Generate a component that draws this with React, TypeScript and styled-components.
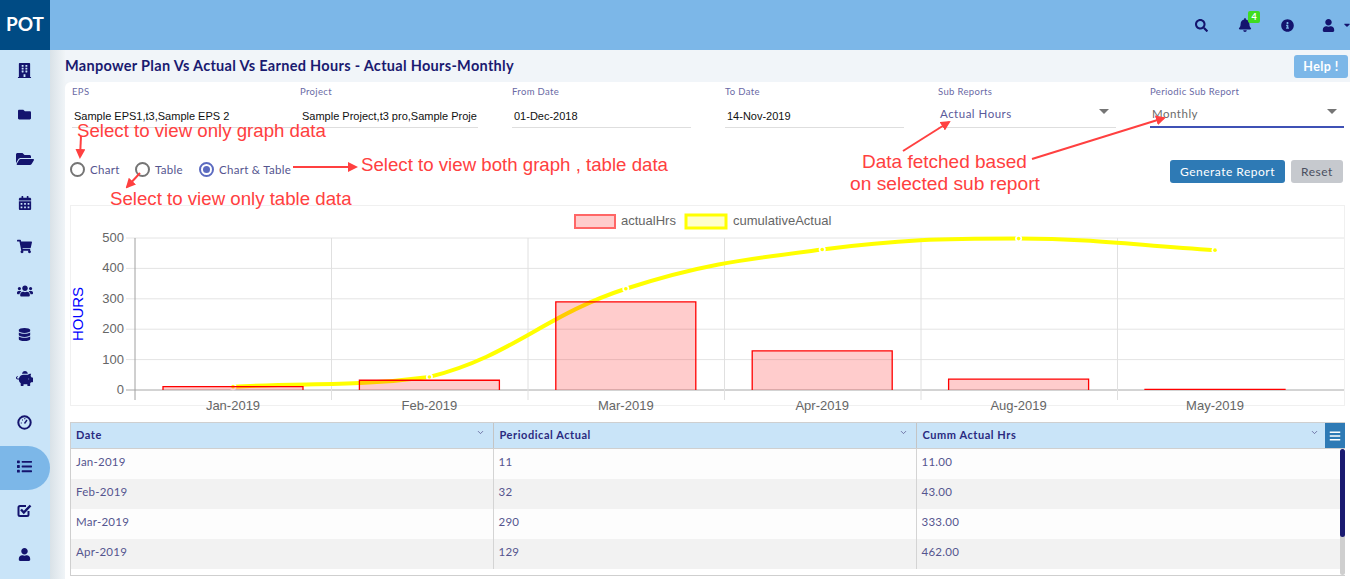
import styled, { createGlobalStyle } from 'styled-components';
import {
    FaBars, FaBell, FaBuilding, FaCalendarAlt, FaCaretDown, FaDatabase, FaFolder, FaFolderOpen,
    FaInfoCircle, FaList, FaPiggyBank, FaSearch, FaShoppingCart, FaUser, FaUsers,
} from 'react-icons/fa';
import { ChevronDown } from 'lucide-react';

const GlobalStyle = createGlobalStyle`
    html, body {
        margin: 0;
        height: 100%;
        overflow: hidden;
        background: #fff;
    }
    * {
        box-sizing: border-box;
    }
`;

const Page = styled.div`
    position: relative;
    width: 1350px;
    height: 579px;
    overflow: hidden;
    display: flex;
    flex-direction: column;
    font-family: Lato, "Liberation Sans", sans-serif;
`;

const Header = styled.header`
    height: 50px;
    flex: none;
    display: flex;
    align-items: center;
    background: #7cb7e8;
`;

const Logo = styled.div`
    width: 50px;
    height: 50px;
    display: flex;
    align-items: center;
    justify-content: center;
    padding-bottom: 3px;
    background: #004b84;
    color: #fff;
    font-size: 19px;
    font-weight: 700;
`;

const HeaderIcons = styled.div`
    margin-left: auto;
    display: flex;
    align-items: center;
    color: #14146e;
`;

const HeaderIcon = styled.div<{ $width: number }>`
    position: relative;
    width: ${props => props.$width}px;
    display: flex;
    align-items: center;
    justify-content: center;
    font-size: 13px;
`;

const Badge = styled.span`
    position: absolute;
    left: 20px;
    top: -7px;
    width: 12px;
    height: 12px;
    border-radius: 2px;
    background: #3fdc1f;
    color: #fff;
    font-size: 9px;
    font-weight: 700;
    line-height: 12px;
    text-align: center;
`;

const Body = styled.div`
    flex: 1;
    min-height: 0;
    display: flex;
`;

const Sidebar = styled.nav`
    width: 50px;
    flex: none;
    background: #c9e4f8;
`;

const SideItem = styled.div<{ $active?: boolean }>`
    height: 44px;
    padding: 0 1px 3px 0;
    display: flex;
    align-items: center;
    justify-content: center;
    color: #14146e;
    border-radius: 0 22px 22px 0;
    background: ${props => props.$active ? '#7cb7e8' : 'transparent'};
`;

const Main = styled.main`
    flex: 1;
    min-width: 0;
    display: flex;
    flex-direction: column;
    padding-left: 15px;
    background: linear-gradient(90deg, #d9e2e8, #f0f4f7 15px);
`;

const TitleBar = styled.div`
    height: 32px;
    flex: none;
    display: flex;
    align-items: center;
    justify-content: space-between;
    padding-right: 2px;
    background: #f1f5f9;
`;

const Title = styled.h1`
    margin: 0 0 2px 0;
    color: #1a1a70;
    font-size: 14.5px;
    font-weight: 700;
    letter-spacing: 0.3px;
`;

const HelpButton = styled.button`
    width: 54px;
    height: 23px;
    padding: 0;
    border: 0;
    border-radius: 3px;
    background: #7cb7e8;
    color: #fff;
    font-family: inherit;
    font-size: 12.5px;
    font-weight: 700;
    letter-spacing: 0.4px;
`;

const Card = styled.section`
    flex: 1;
    min-height: 0;
    padding: 0 5px;
    border-radius: 6px 0 0 0;
    background: #fff;
`;

const FilterRow = styled.div`
    height: 48px;
    padding-left: 2px;
    display: grid;
    grid-template-columns: 228px 212px 213px 213px 212px 194px;
`;

const Field = styled.div<{ $flush?: boolean }>`
    padding: 3px ${props => props.$flush ? 0 : 34}px 0 0;
`;

const FieldLabel = styled.label`
    display: block;
    height: 14px;
    color: #6a6aa5;
    font-size: 9.5px;
    line-height: 14px;
    letter-spacing: 0.35px;
`;

const TextValue = styled.div`
    height: 29px;
    padding: 9px 0 0 2px;
    border-bottom: 1px solid #dedede;
    overflow: hidden;
    color: #111;
    font-family: "Liberation Sans", sans-serif;
    font-size: 11px;
    line-height: 16px;
    white-space: nowrap;
`;

const SelectValue = styled.div<{ $focused?: boolean }>`
    position: relative;
    height: 29px;
    padding: 8px 0 0 2px;
    border-bottom: ${props => props.$focused ? '2px solid #3f51b5' : '1px solid #dedede'};
    color: ${props => props.$focused ? '#6a6a6a' : '#5a5a9a'};
    font-size: 11.5px;
    line-height: 14px;
    letter-spacing: 0.5px;
`;

const SelectCaret = styled.span`
    position: absolute;
    right: 7px;
    top: 10px;
    width: 0;
    height: 0;
    border-left: 5px solid transparent;
    border-right: 5px solid transparent;
    border-top: 5px solid #757575;
`;

const ControlRow = styled.div`
    height: 23px;
    margin-top: 30px;
    display: flex;
    align-items: center;
    justify-content: space-between;
    padding-right: 2px;
`;

const RadioGroup = styled.div`
    display: flex;
    margin: -5px 0 0 0;
`;

const RadioOption = styled.div<{ $width: number }>`
    width: ${props => props.$width}px;
    display: flex;
    align-items: center;
    gap: 5px;
    color: #55558f;
    font-size: 11.5px;
    letter-spacing: 0.3px;
`;

const RadioMark = styled.span<{ $checked?: boolean }>`
    width: 15px;
    height: 15px;
    flex: none;
    display: flex;
    align-items: center;
    justify-content: center;
    border: 2px solid ${props => props.$checked ? '#5c6bc0' : '#757575'};
    border-radius: 50%;

    &::after {
        content: "";
        width: 7px;
        height: 7px;
        border-radius: 50%;
        background: ${props => props.$checked ? '#5c6bc0' : 'transparent'};
    }
`;

const ButtonGroup = styled.div`
    display: flex;
    gap: 6px;
`;

const ActionButton = styled.button<{ $primary?: boolean }>`
    width: ${props => props.$primary ? 115 : 52}px;
    height: 23px;
    padding: 0;
    border: 0;
    border-radius: 3px;
    background: ${props => props.$primary ? '#2e7ab5' : '#c6c9ce'};
    color: ${props => props.$primary ? '#fff' : '#4a4f60'};
    font-family: inherit;
    font-size: 12px;
    font-weight: 400;
    letter-spacing: 0.5px;
`;

const ChartPanel = styled.div`
    height: 201px;
    margin-top: 22px;
    border: 1px solid #f0f0f0;
`;

const ChartSvg = styled.svg`
    display: block;
    width: 100%;
    height: 100%;
    overflow: visible;
    font-family: "Liberation Sans", sans-serif;
    font-size: 13px;
`;

const TableWrap = styled.div`
    position: relative;
    height: 154px;
    margin-top: 16px;
    border: 1px solid #cfcfcf;
    border-right: 0;
    overflow: hidden;
`;

const DataTable = styled.table`
    width: 100%;
    table-layout: fixed;
    border-collapse: collapse;
`;

const HeadCell = styled.th<{ $width?: number; $arrowRight: number }>`
    position: relative;
    width: ${props => props.$width ? `${props.$width}px` : 'auto'};
    height: 25px;
    padding: 0 0 1px 6px;
    border-right: 1px solid #c4c4c4;
    border-bottom: 1px solid #cfcfcf;
    background: #c9e4f8;
    color: #2a2a80;
    font-size: 11px;
    font-weight: 700;
    letter-spacing: 0.55px;
    text-align: left;

    &:first-child {
        padding-left: 5px;
    }

    &:last-child {
        border-right: 0;
    }

    svg {
        position: absolute;
        top: 5px;
        right: ${props => props.$arrowRight}px;
        color: #55558f;
    }
`;

const Row = styled.tr`
    &:nth-child(odd) {
        background: #fdfdfd;
    }
    &:nth-child(even) {
        background: #f2f2f2;
    }
    &:first-child td {
        height: 31px;
    }
`;

const Cell = styled.td`
    height: 30px;
    padding: 6px 0 0 5px;
    border-right: 1px solid #d4d4d4;
    color: #55558f;
    font-size: 11.5px;
    line-height: 14px;
    letter-spacing: 0.25px;
    vertical-align: top;

    &:last-child {
        border-right: 0;
    }
`;

const MenuButton = styled.div`
    position: absolute;
    top: 0;
    right: 0;
    width: 20px;
    height: 25px;
    display: flex;
    align-items: center;
    justify-content: center;
    background: #2e7ab5;
    color: #fff;
    font-size: 12px;
`;

const ScrollTrack = styled.div`
    position: absolute;
    top: 26px;
    right: 0;
    bottom: 0;
    width: 5px;
    background: #cfcfcf;
    border-radius: 3px;
`;

const ScrollThumb = styled.div`
    height: 88px;
    background: #1a1a70;
    border-radius: 3px;
`;

const Annotation = styled.div<{ $x: number; $y: number; $size?: number }>`
    position: absolute;
    left: ${props => props.$x}px;
    top: ${props => props.$y}px;
    color: #ff4040;
    font-family: "Liberation Sans", sans-serif;
    font-size: ${props => props.$size || 18.67}px;
    line-height: 22px;
    white-space: nowrap;
`;

const ArrowLayer = styled.svg`
    position: absolute;
    left: 0;
    top: 0;
    width: 1350px;
    height: 579px;
    pointer-events: none;
`;

// these two have no close match in the icon packs
function GaugeIcon({ size }: { size: number }) {
    return (
        <svg width={size} height={size} viewBox="0 0 15 15" fill="none" stroke="currentColor">
            <circle cx="7.5" cy="7.5" r="6.2" strokeWidth="2" />
            <path d="M7.5 8.5 L10 5" strokeWidth="1.4" />
            <path d="M3.8 8 h1 M5 5 h1 M7.3 3.6 h1" strokeWidth="1.2" />
        </svg>
    );
}

function CheckBoxIcon({ size }: { size: number }) {
    return (
        <svg width={size} height={size} viewBox="0 0 15 15" fill="none" stroke="currentColor">
            <path d="M11.5 8 V11.5 Q11.5 13 10 13 H3 Q1.5 13 1.5 11.5 V4.5 Q1.5 3 3 3 H9" strokeWidth="2" />
            <path d="M4 6.5 L6.8 9.5 L13.5 2.5" strokeWidth="2.4" />
        </svg>
    );
}

const sideIcons = [
    { Icon: FaBuilding, size: 15 },
    { Icon: FaFolder, size: 13 },
    { Icon: FaFolderOpen, size: 18 },
    { Icon: FaCalendarAlt, size: 14 },
    { Icon: FaShoppingCart, size: 15 },
    { Icon: FaUsers, size: 16 },
    { Icon: FaDatabase, size: 13 },
    { Icon: FaPiggyBank, size: 17 },
    { Icon: GaugeIcon, size: 15 },
    { Icon: FaList, size: 15 },
    { Icon: CheckBoxIcon, size: 15 },
    { Icon: FaUser, size: 13 },
];

const filters = [
    { label: 'EPS', value: 'Sample EPS1,t3,Sample EPS 2', flush: true },
    { label: 'Project', value: 'Sample Project,t3 pro,Sample Proje' },
    { label: 'From Date', value: '01-Dec-2018' },
    { label: 'To Date', value: '14-Nov-2019' },
];

const months = [
    { name: 'Jan-2019', actual: 11, cumm: 11 },
    { name: 'Feb-2019', actual: 32, cumm: 43 },
    { name: 'Mar-2019', actual: 290, cumm: 333 },
    { name: 'Apr-2019', actual: 129, cumm: 462 },
    { name: 'Aug-2019', actual: 36, cumm: 498 },
    { name: 'May-2019', actual: 2, cumm: 460 },
];

const rows = [
    ['Jan-2019', '11', '11.00'],
    ['Feb-2019', '32', '43.00'],
    ['Mar-2019', '290', '333.00'],
    ['Apr-2019', '129', '462.00'],
];

const arrows = [
    [81, 136, 80, 157],
    [140, 173, 127, 187],
    [293, 167, 356, 167],
    [903, 151, 949, 122],
    [1032, 159, 1164, 118],
];

// chart scale, page coordinates
const yOf = (v: number) => 390 - v * 0.304;
const xOf = (i: number) => 233 + i * 196.4;
const gridX = [135, 331.5, 528, 724.5, 921, 1117.5];

const clamp = (v: number, a: number, b: number) => Math.min(Math.max(a, b), Math.max(Math.min(a, b), v));

// chart.js style curve, control points kept inside each segment so it does not dip
function linePath(points: number[][]) {
    const t = 0.4;
    const ctrl = points.map((p, i) => {
        const prev = points[i - 1] || p;
        const next = points[i + 1] || p;
        const d01 = Math.hypot(p[0] - prev[0], p[1] - prev[1]);
        const d12 = Math.hypot(next[0] - p[0], next[1] - p[1]);
        const sum = d01 + d12 || 1;
        const fa = (t * d01) / sum;
        const fb = (t * d12) / sum;
        return {
            before: [p[0] - fa * (next[0] - prev[0]), clamp(p[1] - fa * (next[1] - prev[1]), p[1], prev[1])],
            after: [p[0] + fb * (next[0] - prev[0]), clamp(p[1] + fb * (next[1] - prev[1]), p[1], next[1])],
        };
    });
    let d = `M${points[0][0]} ${points[0][1]}`;
    for (let i = 1; i < points.length; i++) {
        const a = ctrl[i - 1].after;
        const b = ctrl[i].before;
        d += ` C${a[0]} ${a[1]} ${b[0]} ${b[1]} ${points[i][0]} ${points[i][1]}`;
    }
    return d;
}

function Chart() {
    const points = months.map((m, i) => [xOf(i), yOf(m.cumm)]);

    return (
        <ChartSvg viewBox="71 206 1273 199">
            <rect x="575" y="215" width="40" height="13" fill="rgba(255,0,0,0.2)" stroke="#ff6666" strokeWidth="2" />
            <text x="621" y="225" fill="#666">actualHrs</text>
            <rect x="686" y="215" width="40" height="13" fill="rgba(255,255,0,0.2)" stroke="#ffff00" strokeWidth="3" />
            <text x="733" y="225" fill="#666">cumulativeActual</text>

            {[0, 100, 200, 300, 400, 500].map((v) => (
                <g key={v}>
                    <line x1="126" x2="1344" y1={yOf(v)} y2={yOf(v)} stroke={v === 0 ? '#a8a8a8' : '#e4e4e4'} />
                    <text x="124" y={yOf(v) + 4} textAnchor="end" fill="#666">{v}</text>
                </g>
            ))}
            {gridX.map((x, i) => (
                <line key={x} x1={x} x2={x} y1="238" y2="400" stroke={i === 0 ? '#a0a0a0' : '#e0e0e0'} />
            ))}

            <text transform="translate(83 314) rotate(-90)" textAnchor="middle" fill="#0000ff" fontSize="15">HOURS</text>

            <path d={linePath(points)} fill="none" stroke="#ffff00" strokeWidth="4" />
            {points.map((p) => (
                <g key={p[0]}>
                    <circle cx={p[0]} cy={p[1]} r="3.5" fill="#fff" />
                    <circle cx={p[0]} cy={p[1]} r="1.8" fill="#ffff00" />
                </g>
            ))}

            {months.map((m, i) => {
                const left = xOf(i) - 70;
                const right = xOf(i) + 70;
                return (
                    <g key={m.name}>
                        <rect x={left} y={yOf(m.actual)} width="140" height={390 - yOf(m.actual)} fill="rgba(255,0,0,0.2)" />
                        <path d={`M${left} 390 V${yOf(m.actual)} H${right} V390`} fill="none" stroke="#ff0000" strokeWidth="1.3" />
                        <text x={xOf(i)} y="409.5" textAnchor="middle" fill="#666">{m.name}</text>
                    </g>
                );
            })}
        </ChartSvg>
    );
}

function App() {
    return (
        <Page>
            <GlobalStyle />
            <Header>
                <Logo>POT</Logo>
                <HeaderIcons>
                    <HeaderIcon $width={54}><FaSearch /></HeaderIcon>
                    <HeaderIcon $width={34}><FaBell size={14} /><Badge>4</Badge></HeaderIcon>
                    <HeaderIcon $width={50}><FaInfoCircle /></HeaderIcon>
                    <HeaderIcon $width={32}><FaUser /></HeaderIcon>
                    <HeaderIcon $width={6}><FaCaretDown size={10} /></HeaderIcon>
                </HeaderIcons>
            </Header>
            <Body>
                <Sidebar>
                    {sideIcons.map(({ Icon, size }, i) => (
                        <SideItem key={i} $active={i === 9}><Icon size={size} /></SideItem>
                    ))}
                </Sidebar>
                <Main>
                    <TitleBar>
                        <Title>Manpower Plan Vs Actual Vs Earned Hours - Actual Hours-Monthly</Title>
                        <HelpButton>Help !</HelpButton>
                    </TitleBar>
                    <Card>
                        <FilterRow>
                            {filters.map((f) => (
                                <Field key={f.label} $flush={f.flush}>
                                    <FieldLabel>{f.label}</FieldLabel>
                                    <TextValue>{f.value}</TextValue>
                                </Field>
                            ))}
                            <Field>
                                <FieldLabel>Sub Reports</FieldLabel>
                                <SelectValue>Actual Hours<SelectCaret /></SelectValue>
                            </Field>
                            <Field $flush>
                                <FieldLabel>Periodic Sub Report</FieldLabel>
                                <SelectValue $focused>Monthly<SelectCaret /></SelectValue>
                            </Field>
                        </FilterRow>

                        <ControlRow>
                            <RadioGroup>
                                <RadioOption $width={65}><RadioMark />Chart</RadioOption>
                                <RadioOption $width={64}><RadioMark />Table</RadioOption>
                                <RadioOption $width={100}><RadioMark $checked />Chart &amp; Table</RadioOption>
                            </RadioGroup>
                            <ButtonGroup>
                                <ActionButton $primary>Generate Report</ActionButton>
                                <ActionButton>Reset</ActionButton>
                            </ButtonGroup>
                        </ControlRow>

                        <ChartPanel>
                            <Chart />
                        </ChartPanel>

                        <TableWrap>
                            <DataTable>
                                <thead>
                                    <tr>
                                        <HeadCell $width={422} $arrowRight={8}>Date<ChevronDown size={9} /></HeadCell>
                                        <HeadCell $width={423} $arrowRight={8}>Periodical Actual<ChevronDown size={9} /></HeadCell>
                                        <HeadCell $arrowRight={26}>Cumm Actual Hrs<ChevronDown size={9} /></HeadCell>
                                    </tr>
                                </thead>
                                <tbody>
                                    {rows.map((r) => (
                                        <Row key={r[0]}>
                                            {r.map((c) => <Cell key={c}>{c}</Cell>)}
                                        </Row>
                                    ))}
                                </tbody>
                            </DataTable>
                            <MenuButton><FaBars /></MenuButton>
                            <ScrollTrack><ScrollThumb /></ScrollTrack>
                        </TableWrap>
                    </Card>
                </Main>
            </Body>

            <ArrowLayer>
                <defs>
                    <marker id="head" markerWidth="5" markerHeight="5" refX="4" refY="2.5" orient="auto">
                        <path d="M0 0 L5 2.5 L0 5 Z" fill="#ff4040" />
                    </marker>
                </defs>
                {arrows.map((a) => (
                    <line key={a[0]} x1={a[0]} y1={a[1]} x2={a[2]} y2={a[3]} stroke="#ff4040" strokeWidth="2" markerEnd="url(#head)" />
                ))}
            </ArrowLayer>
            <Annotation $x={77} $y={120}>Select to view only graph data</Annotation>
            <Annotation $x={361} $y={154}>Select to view both graph , table data</Annotation>
            <Annotation $x={110} $y={188}>Select to view only table data</Annotation>
            <Annotation $x={862} $y={151} $size={19}>Data fetched based</Annotation>
            <Annotation $x={850} $y={173} $size={19.2}>on selected sub report</Annotation>
        </Page>
    );
}

export default App;
